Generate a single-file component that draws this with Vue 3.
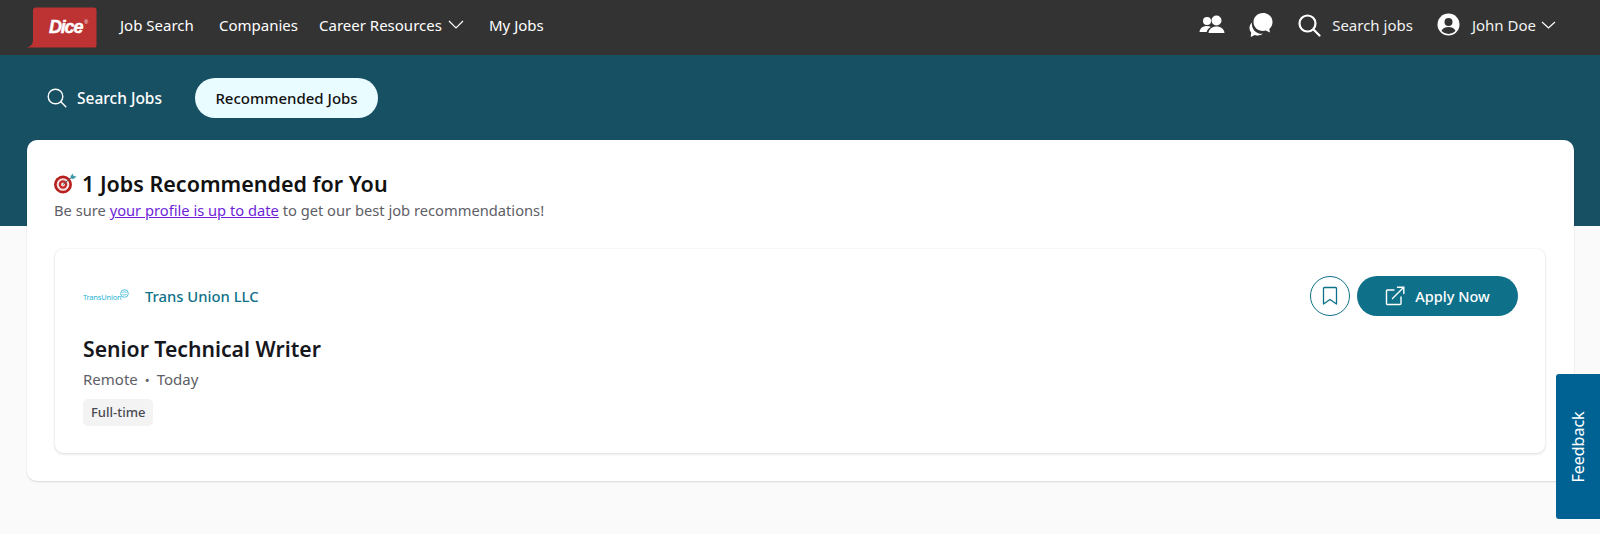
<template>
  <div class="page">
    <header class="topbar">
      <a class="logo" href="#">
        <svg width="70" height="41" viewBox="0 0 70 41" aria-hidden="true">
          <path d="M6 3.500C6 1.500 7 .5 9 .5H67C69 .5 69.500 1.500 69.500 3.500V38C69.500 40 69 40.500 67 40.500H0C3.500 39.500 6 37.500 6 33Z" fill="#bd3333" />
        </svg>
        <span class="logo-text">Dice<sup>®</sup></span>
      </a>
      <nav class="nav">
        <a href="#">Job Search</a>
        <a href="#">Companies</a>
        <a href="#" class="nav-drop">Career Resources
          <svg width="16" height="9" viewBox="0 0 16 9" aria-hidden="true"><path d="M1 1l7 7 7-7" fill="none" stroke="#fff" stroke-width="1.200" /></svg>
        </a>
        <a href="#">My Jobs</a>
      </nav>
      <div class="top-right">
        <svg class="ic-people" width="26" height="20" viewBox="0 0 26 20" aria-hidden="true">
          <circle cx="8" cy="6" r="4" fill="#fff" />
          <circle cx="17.500" cy="5.500" r="5" fill="#fff" />
          <path d="M0.500 17C1 13 4 11 8 11c1.500 0 2.800 .3 3.800 .9C9.500 13 8 14.800 7.700 17Z" fill="#fff" />
          <path d="M9.500 18C10 14 13 11.500 17.500 11.500S25 14 25.500 18Z" fill="#fff" />
        </svg>
        <svg class="ic-chat" width="26" height="26" viewBox="0 0 26 26" aria-hidden="true">
          <path d="M15 1c5.500 0 9.500 4 9.500 9 0 3-1.200 5.300-3.200 7l.7 3.500-4.300-2a11 11 0 0 1-2.700 .4c-5.500 0-9.500-4-9.500-9s4-9 9.500-9Z" fill="#fff" />
          <path d="M4 10.500C2.300 12 1.500 14 1.500 16c0 1.800 .7 3.300 1.700 4.500L2.700 25l4.100-2c1 .4 2 .5 3 .5 2 0 3.700-.6 5-1.700-5.800 .6-11.800-3.800-10.800-11.800Z" fill="#fff" />
        </svg>
        <a href="#" class="top-search">
          <svg width="24" height="24" viewBox="0 0 24 24" aria-hidden="true">
            <circle cx="10.500" cy="10.500" r="8" fill="none" stroke="#fff" stroke-width="2.200" />
            <path d="M16.500 16.500l6 6" stroke="#fff" stroke-width="2.200" stroke-linecap="round" />
          </svg>
          Search jobs
        </a>
        <a href="#" class="top-user">
          <svg width="23" height="23" viewBox="0 0 23 23" aria-hidden="true">
            <circle cx="11.500" cy="11.500" r="11" fill="#fff" />
            <circle cx="11.500" cy="9" r="4" fill="#333" />
            <path d="M4.500 18c1-2.800 3.500-4 7-4s6 1.200 7 4a9.800 9.800 0 0 1-14 0Z" fill="#333" />
          </svg>
          John Doe
          <svg class="user-chevron" width="15" height="8" viewBox="0 0 15 8" aria-hidden="true"><path d="M1 1l6.500 6 6.500-6" fill="none" stroke="#fff" stroke-width="1.200" /></svg>
        </a>
      </div>
    </header>

    <section class="band">
      <div class="tabs">
        <a href="#" class="tab">
          <svg width="20" height="20" viewBox="0 0 20 20" aria-hidden="true">
            <circle cx="8.500" cy="8.500" r="7.300" fill="none" stroke="#fff" stroke-width="1.400" />
            <path d="M13.800 13.800l5 5" stroke="#fff" stroke-width="1.400" stroke-linecap="round" />
          </svg>
          Search Jobs
        </a>
        <a href="#" class="tab tab-active">Recommended Jobs</a>
      </div>
    </section>

    <main class="panel">
      <h1 class="panel-title">
        <svg width="24" height="22" viewBox="0 0 24 22" aria-hidden="true">
          <circle cx="10" cy="12.500" r="9" fill="#b81f1f" />
          <circle cx="10" cy="12.500" r="6.300" fill="#f3e3e3" />
          <circle cx="10" cy="12.500" r="4.200" fill="#c62828" />
          <circle cx="10" cy="12.500" r="1.900" fill="#f3e3e3" />
          <path d="M10 12.500L19 5" stroke="#555" stroke-width="1" />
          <path d="M17.500 4.500L19.500 1.500 20.500 4 23.500 4.500 20.500 7 18 6.500Z" fill="#3d9aa8" />
        </svg>
        1 Jobs Recommended for You
      </h1>
      <p class="panel-sub">Be sure <a href="#">your profile is up to date</a> to get our best job recommendations!</p>

      <article class="job">
        <div class="job-head">
          <div class="company">
            <span class="company-logo">
              <span class="company-logo-text">TransUnion</span>
              <svg width="9" height="9" viewBox="0 0 9 9" aria-hidden="true">
                <circle cx="4.500" cy="4.500" r="3.800" fill="none" stroke="#27b3d4" stroke-width=".8" />
                <path d="M2.500 3.500c1.500-1 3-.5 4 0M2.500 5.500c1.500 .7 3 .5 4-.3" fill="none" stroke="#27b3d4" stroke-width=".8" />
              </svg>
            </span>
            <a href="#" class="company-name">Trans Union LLC</a>
          </div>
          <div class="job-actions">
            <button type="button" class="save-btn" aria-label="Save job">
              <svg width="16" height="20" viewBox="0 0 16 20" aria-hidden="true">
                <path d="M2.500 1.500h11a1 1 0 0 1 1 1V18L8 13.500 1.500 18V2.500a1 1 0 0 1 1-1Z" fill="none" stroke="#0f7189" stroke-width="1.300" stroke-linejoin="round" />
              </svg>
            </button>
            <button type="button" class="apply-btn">
              <svg width="20" height="20" viewBox="0 0 20 20" aria-hidden="true">
                <path d="M16 11v6.500a1 1 0 0 1-1 1H2.500a1 1 0 0 1-1-1V5a1 1 0 0 1 1-1H9" fill="none" stroke="#fff" stroke-width="1.400" stroke-linecap="round" />
                <path d="M7.500 12.500L18.500 1.500M12.500 1.200h6.300v6.300" fill="none" stroke="#fff" stroke-width="1.400" stroke-linecap="round" />
              </svg>
              Apply Now
            </button>
          </div>
        </div>
        <h2 class="job-title">Senior Technical Writer</h2>
        <p class="job-meta">Remote<span class="dot">•</span>Today</p>
        <span class="tag">Full-time</span>
      </article>
    </main>

    <button type="button" class="feedback"><span>Feedback</span></button>
  </div>
</template>

<script setup>
</script>

<style>
html,
body {
  margin: 0;
  background: #fafafa;
}
</style>

<style scoped>
.page {
  position: relative;
  height: 534px;
  overflow: hidden;
  background: #fafafa;
  font-family: "Noto Sans", "Liberation Sans", sans-serif;
  color: #111;
}

a {
  color: inherit;
  text-decoration: none;
}

.topbar {
  height: 55px;
  display: flex;
  align-items: center;
  background: #333;
  color: #fff;
  padding: 0 0 6px 27px;
  box-sizing: border-box;
}

.logo {
  position: relative;
  display: block;
  width: 70px;
  height: 41px;
  margin-top: 6px;
}

.logo svg {
  display: block;
}

.logo-text {
  position: absolute;
  left: 22px;
  top: 10px;
  font-family: "Liberation Sans", sans-serif;
  font-size: 18px;
  line-height: 20px;
  font-weight: 700;
  font-style: italic;
  letter-spacing: -1.200px;
  -webkit-text-stroke: 0.4px #fff;
  color: #fff;
}

.logo-text sup {
  font-size: 5px;
  font-weight: 400;
  letter-spacing: 0;
  -webkit-text-stroke: 0;
  vertical-align: 9px;
  line-height: 0;
  margin-left: 2px;
}

.nav {
  display: grid;
  grid-template-columns: 99px 100px 170px auto;
  align-items: center;
  margin-left: 23px;
  font-size: 15px;
}

.nav-drop {
  display: flex;
  align-items: center;
  gap: 6px;
}

.top-right {
  margin-left: auto;
  display: flex;
  align-items: center;
  padding-right: 44px;
  font-size: 15px;
  color: #f2f2f2;
}

.ic-chat {
  margin-left: 23px;
}

.top-search {
  display: flex;
  align-items: center;
  gap: 11px;
  margin-left: 23px;
}

.top-user {
  display: flex;
  align-items: center;
  gap: 12px;
  margin-left: 24px;
}

.user-chevron {
  margin-left: -7px;
}

.band {
  height: 171px;
  box-sizing: border-box;
  background: #174f63;
  padding: 23px 0 0 27px;
}

.tabs {
  display: flex;
  align-items: center;
  gap: 13px;
}

.tab {
  height: 40px;
  display: flex;
  align-items: center;
  gap: 10px;
  padding: 0 20px;
  border-radius: 20px;
  color: #fff;
  font-size: 15.500px;
  font-weight: 500;
}

.tab-active {
  background: #e9fcff;
  color: #111;
  width: 183px;
  padding: 0;
  justify-content: center;
  font-size: 15px;
}

.panel {
  position: relative;
  height: 341px;
  box-sizing: border-box;
  margin: -86px 26px 0 27px;
  padding: 30px 29px 0 28px;
  border-radius: 10px;
  background: #fff;
  box-shadow: 0 1px 2px rgba(0, 0, 0, 0.14);
}

.panel-title {
  display: flex;
  align-items: center;
  gap: 5px;
  margin: 0 0 0 -2px;
  height: 26px;
  font-size: 21.500px;
  font-weight: 600;
  color: #111;
}

.panel-sub {
  margin: 4px 0 0 -1px;
  font-size: 14.700px;
  line-height: 20px;
  color: #5e5e66;
}

.panel-sub a {
  color: #6d1fd8;
  text-decoration: underline;
}

.job {
  height: 204px;
  box-sizing: border-box;
  margin-top: 29px;
  padding: 27px 27px 0 28px;
  border-radius: 8px;
  background: #fff;
  box-shadow: 0 0 1px rgba(0, 0, 0, 0.1), 0 1px 3px rgba(0, 0, 0, 0.14);
}

.job-head {
  height: 40px;
  display: flex;
  align-items: center;
  justify-content: space-between;
}

.company {
  display: flex;
  align-items: center;
  gap: 15px;
}

.company-logo {
  display: flex;
  align-items: flex-start;
  width: 47px;
  height: 14px;
}

.company-logo-text {
  font-size: 7.500px;
  line-height: 17px;
  letter-spacing: -0.2px;
  color: #27b3d4;
  white-space: nowrap;
}

.company-logo svg {
  margin-left: -1px;
  flex: none;
}

.company-name {
  font-size: 14.800px;
  font-weight: 500;
  color: #0f7189;
}

.job-actions {
  display: flex;
  align-items: center;
  gap: 7px;
}

.save-btn {
  width: 40px;
  height: 40px;
  display: flex;
  align-items: center;
  justify-content: center;
  padding: 0;
  border: 1px solid #0f7189;
  border-radius: 50%;
  background: #fff;
}

.apply-btn {
  width: 161px;
  height: 40px;
  display: flex;
  align-items: center;
  justify-content: center;
  gap: 10px;
  border: 0;
  border-radius: 20px;
  background: #0f7189;
  color: #fff;
  font-family: inherit;
  font-size: 14.500px;
  font-weight: 500;
}

.job-title {
  margin: 18px 0 0;
  font-size: 21.200px;
  line-height: 30px;
  font-weight: 600;
  color: #16161d;
}

.job-meta {
  margin: 5px 0 0;
  font-size: 15px;
  line-height: 20px;
  color: #5e5e66;
}

.dot {
  margin: 0 7px;
  font-size: 13px;
}

.tag {
  display: inline-block;
  margin-top: 9px;
  height: 27px;
  padding: 0 8px;
  border-radius: 5px;
  background: #f3f3f4;
  font-size: 13px;
  line-height: 27px;
  font-weight: 500;
  color: #4a4a52;
}

.feedback {
  position: absolute;
  right: 0;
  top: 374px;
  width: 44px;
  height: 145px;
  display: flex;
  align-items: center;
  justify-content: center;
  padding: 0;
  border: 0;
  border-radius: 3px 0 0 3px;
  background: #006293;
  color: #fff;
  font-family: inherit;
  font-size: 16px;
}

.feedback span {
  transform: rotate(-90deg);
  white-space: nowrap;
}
</style>
